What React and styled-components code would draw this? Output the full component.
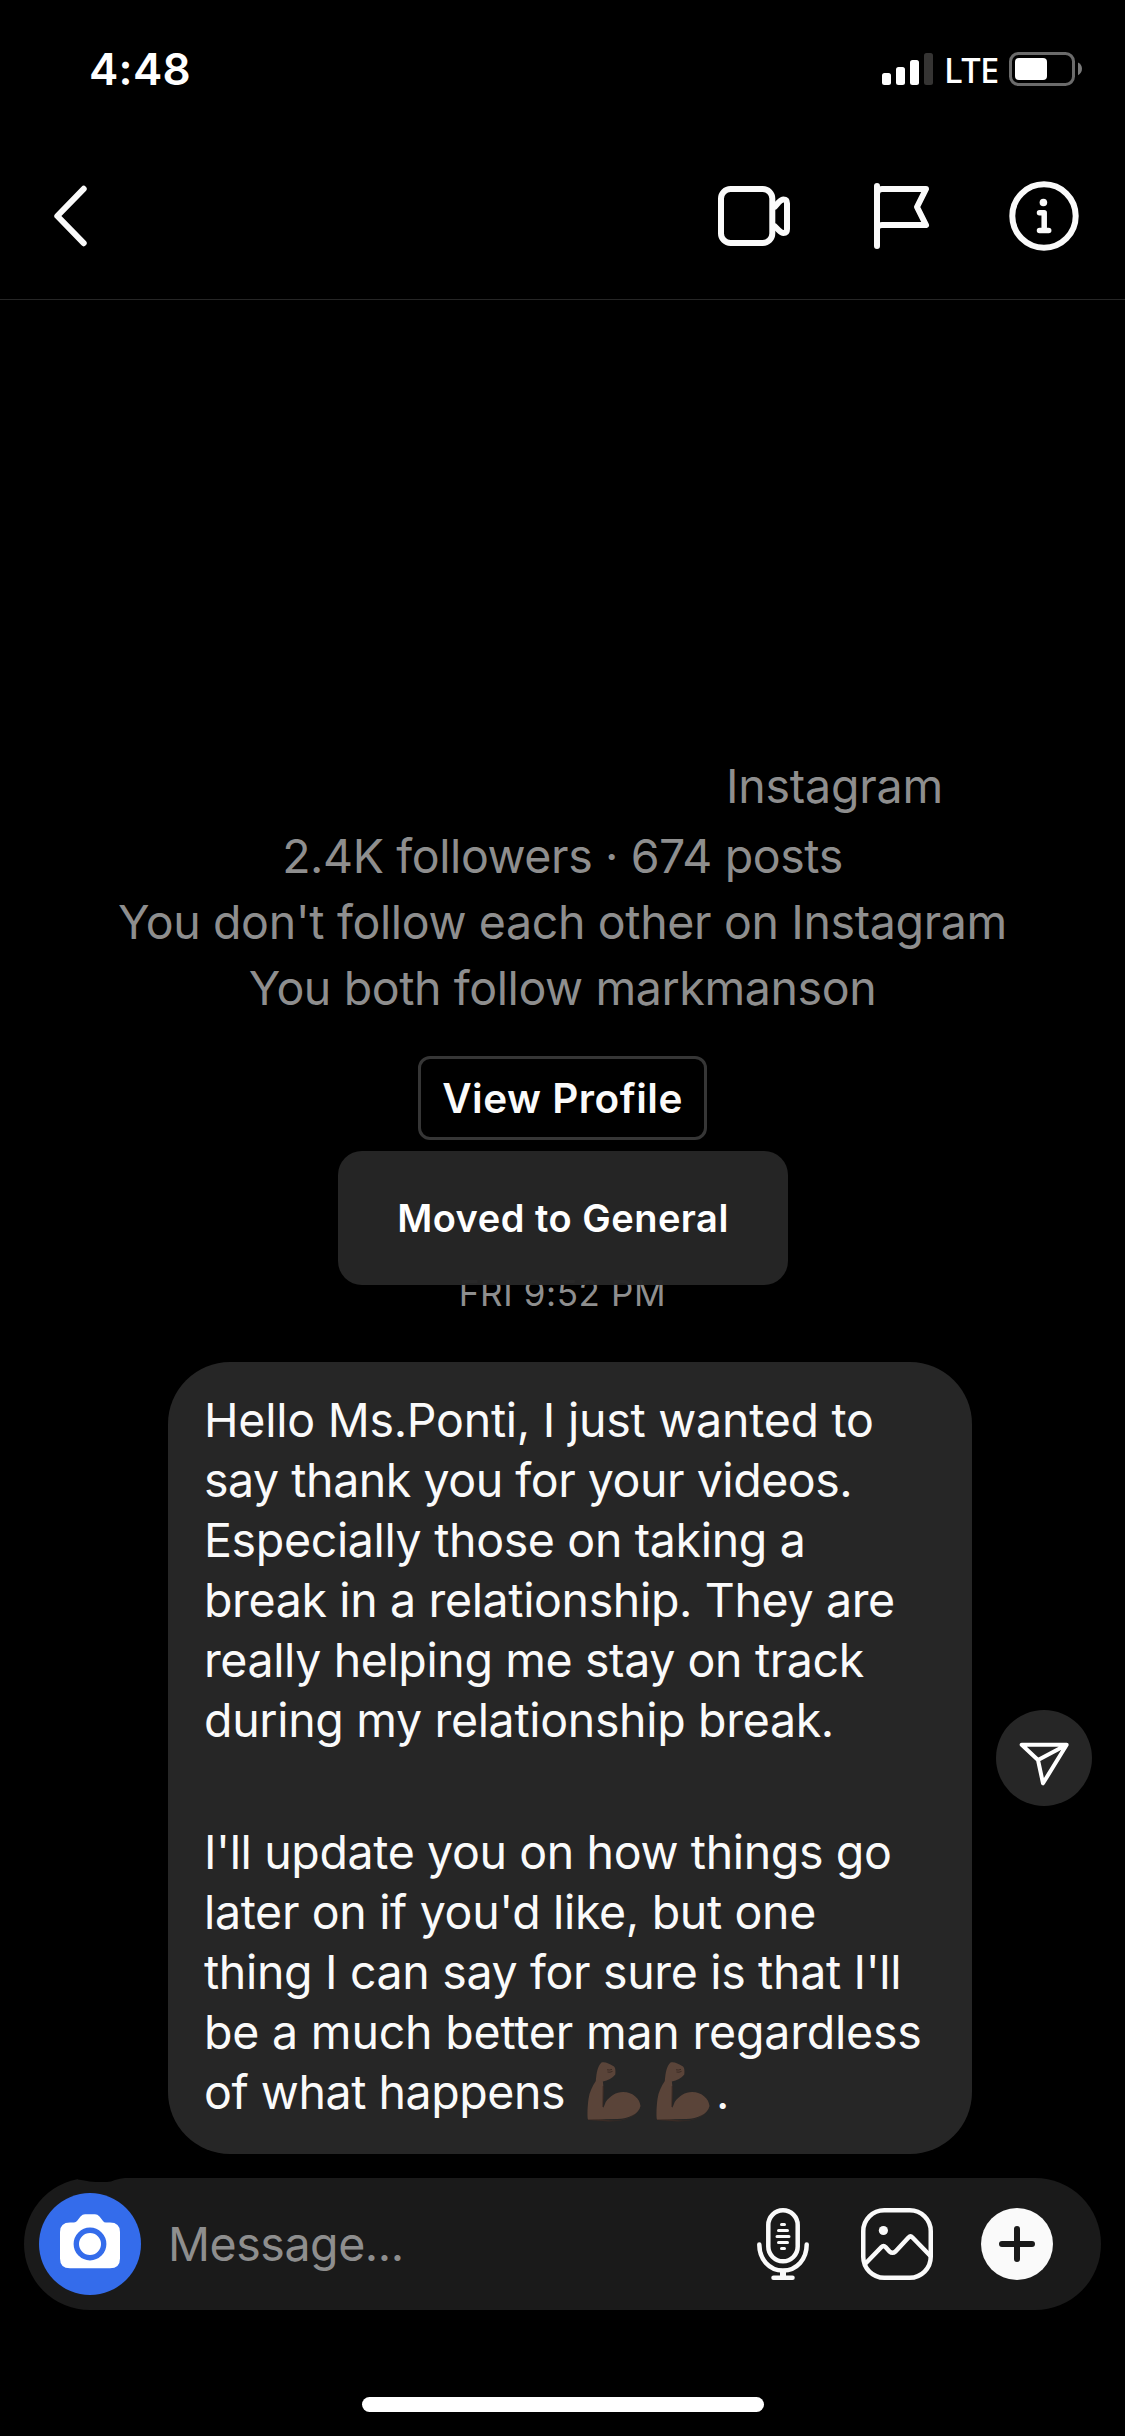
import React from 'react'
import styled, { createGlobalStyle } from 'styled-components'

const aboutLines = [
  { text: '2.4K followers · 674 posts', track: -0.4 },
  { text: "You don't follow each other on Instagram", track: -0.36 },
  { text: 'You both follow markmanson', track: -0.4 },
]

const paragraphs = [
  [
    { text: 'Hello Ms.Ponti, I just wanted to', track: -0.25 },
    { text: 'say thank you for your videos.', track: -0.46 },
    { text: 'Especially those on taking a', track: -0.35 },
    { text: 'break in a relationship. They are', track: -0.36 },
    { text: 'really helping me stay on track', track: -0.39 },
    { text: 'during my relationship break.', track: -0.33 },
  ],
  [
    { text: "I'll update you on how things go", track: -0.37 },
    { text: "later on if you'd like, but one", track: -0.34 },
    { text: "thing I can say for sure is that I'll", track: -0.34 },
    { text: 'be a much better man regardless', track: -0.2 },
    { text: 'of what happens', track: -0.45, flex: true },
  ],
]

function Biceps() {
  return (
    <BicepsIcon viewBox="0 0 54 60" role="img" aria-label="flexed biceps">
      <path fill="#3a2b25" d="M1 48C4 54 10 57 20 58C34 60 48 56 53 45L54 41C52 52 44 59 22 59.500L1 58Z" />
      <path
        fill="#5a4439"
        d="M14.500.5C18-.5 22 1.500 27 4.500C28.800 6.500 28.500 10 28.300 12.500C25.500 16 21 18.500 15.800 19.500C17 25 16 35 16 46C17 44.500 18 42 18.700 40C23 34 29 30 36 30C46 30 53 37 53.500 44C52 52 42 56.500 30 57L1 57.500C0 56 .5 44 1.500 37C2.500 30 5 25 8.800 19C9.500 12 10 5 14.500.5Z"
      />
      <path stroke="#33241f" strokeWidth=".8" fill="none" d="M20 7.800l2.500.2 2.500-.6M20.500 10l2.500.2 2.500-.8M16.200 24L15.900 45" />
    </BicepsIcon>
  )
}

function StatusBar() {
  return (
    <Status>
      <Clock>4:48</Clock>
      <svg width="51" height="32" viewBox="0 0 51 32" fill="#fff">
        <rect x="0" y="20" width="9" height="12" rx="2.500" />
        <rect x="14" y="14" width="9" height="18" rx="2.500" />
        <rect x="28" y="7" width="9" height="25" rx="2.500" />
        <rect x="42" y="0" width="9" height="32" rx="2.500" fill="#353433" />
      </svg>
      <Carrier>LTE</Carrier>
      <svg width="73" height="34" viewBox="0 0 73 34">
        <rect x="1.500" y="1.500" width="63" height="31" rx="8" fill="none" stroke="#6b6b6b" strokeWidth="3" />
        <rect x="6" y="6" width="32" height="22" rx="4" fill="#fff" />
        <path d="M69 10.500c2.500 1.200 4 3.500 4 6.300s-1.500 5.300-4 6.500z" fill="#7a7a7a" />
      </svg>
    </Status>
  )
}

function Header() {
  return (
    <TopBar>
      <BackButton>
        <svg width="40" height="72" viewBox="0 0 40 72">
          <path d="M35.700 8.800L9.300 36l26.400 27.200" />
        </svg>
      </BackButton>
      <Actions>
        <svg width="75" height="72" viewBox="0 0 75 72">
          <rect x="4" y="9" width="51.300" height="54" rx="9.500" />
          <path d="M58 26.500L61.500 22.500C63.500 20.500 65 19.500 66.500 19.500Q70 19.500 70 23.500V49Q70 53 66.500 53C65 53 63.500 52 61.500 50L58 46.500" />
        </svg>
        <svg width="60" height="72" viewBox="0 0 60 72">
          <path d="M4 6V66M4 14Q4 9 9 9H53L44 27L53 45H9Q4 45 4 49" />
        </svg>
        <svg width="72" height="72" viewBox="0 0 72 72">
          <circle cx="36" cy="36" r="31.700" />
          <circle cx="35.400" cy="22.500" r="3.800" fill="#fafafa" stroke="none" />
          <path d="M31.500 32.800H36.200V50.500M31.500 50.500H40.700" strokeWidth="5.500" />
        </svg>
      </Actions>
    </TopBar>
  )
}

function Composer() {
  return (
    <InputBar>
      <Notch viewBox="0 0 48 6">
        <path d="M0 0V1.500Q5 2 9 3Q13 4 22 4H29Q33 4 37 2Q42 .5 47 0Z" />
      </Notch>
      <CameraButton>
        <svg width="60" height="55" viewBox="0 0 60 55">
          <path
            fill="#fff"
            d="M10 8.500H14Q16 8.300 17 7L20.500 2.500Q22.500.3 25 .3H35Q37.500.3 39.500 2.500L43 7Q44 8.500 46 8.500H50Q60 8.500 60 18V44.500Q60 54.300 50 54.300H10Q0 54.300 0 44.500V18Q0 8.500 10 8.500Z"
          />
          <circle cx="30" cy="30" r="13.700" fill="none" stroke="#346ceb" strokeWidth="5.400" />
        </svg>
      </CameraButton>
      <Placeholder>Message...</Placeholder>
      <Tool>
        <rect x="21.300" y="2.300" width="29.400" height="51" rx="14.700" />
        <path d="M12.300 36.500C12.300 51 22 62.500 36 62.500S59.700 51 59.700 36.500" />
        <path d="M36 63V69" strokeWidth="6" strokeLinecap="butt" />
        <path d="M26.500 69.700H45.500" />
        <path d="M34.500 16.500h3M31.500 22.500h9M30 28.500h12M31.500 34.500h9M34.500 40.500h3" strokeWidth="3" />
      </Tool>
      <Tool $gap={42}>
        <rect x="2.250" y="2.250" width="67.500" height="67.500" rx="21" />
        <circle cx="22.400" cy="22.500" r="4.600" fill="#fafafa" stroke="none" />
        <path d="M4.500 55.500L20.500 39Q22.500 37 24.500 39L28.500 43.500Q31.500 46 34.500 43.500L47.500 29.500Q49.500 27.500 51.500 29.500L69 47.500" />
      </Tool>
      <Tool $gap={48}>
        <circle cx="36" cy="36" r="36" fill="#fafafa" stroke="none" />
        <path d="M36 21V51M21 36H51" stroke="#1a1a1a" strokeWidth="6" />
      </Tool>
    </InputBar>
  )
}

function App() {
  return (
    <Screen>
      <GlobalStyle />
      <StatusBar />
      <Header />
      <Thread>
        <AccountRow>
          <Line $track={-0.2}>Instagram</Line>
        </AccountRow>
        {aboutLines.map(line => <Line key={line.text} $track={line.track}>{line.text}</Line>)}
        <ProfileButton>View Profile</ProfileButton>
        <DateLabel>FRI 9:52 PM</DateLabel>
        <Toast>Moved to General</Toast>
      </Thread>
      <MessageRow>
        <Bubble>
          {paragraphs.map((lines, i) =>
            <Paragraph key={i}>
              {lines.map(line =>
                <BubbleLine key={line.text} $track={line.track}>
                  {line.text}
                  {line.flex && <Emojis><Biceps /><Biceps />.</Emojis>}
                </BubbleLine>)}
            </Paragraph>)}
        </Bubble>
        <ShareButton>
          <svg width="52" height="48" viewBox="0 0 52 48">
            <path d="M3.700 4.700H48.700L25 43.300L20 20ZM20 20L48.700 4.700" />
          </svg>
        </ShareButton>
      </MessageRow>
      <Composer />
      <HomeIndicator />
    </Screen>
  )
}

export default App

const GlobalStyle = createGlobalStyle`
  body {
    margin: 0;
    background: #000;
  }
`

const Screen = styled.div`
  width: 1125px;
  height: 2436px;
  overflow: hidden;
  display: flex;
  flex-direction: column;
  background: #000;
  color: #fafafa;
  font-family: Inter, "Liberation Sans", sans-serif;
  font-size: 46.5px;

  svg {
    display: block;
    flex: none;
  }
`

const Status = styled.div`
  height: 138px;
  display: flex;
  align-items: center;
  padding: 0 43px 0 89px;
  color: #fff;
`

const Clock = styled.div`
  flex: 1;
  font-size: 44px;
  font-weight: 600;
  letter-spacing: 0.3px;
`

const Carrier = styled.div`
  width: 76px;
  padding-left: 11px;
  box-sizing: border-box;
  font-family: "Noto Sans", sans-serif;
  font-size: 34.5px;
  font-weight: 500;
  letter-spacing: -0.6px;
`

const TopBar = styled.div`
  height: 162px;
  box-sizing: border-box;
  padding: 0 45px 5px 48px;
  display: flex;
  align-items: center;
  justify-content: space-between;
  border-bottom: 1px solid #262626;

  svg {
    fill: none;
    stroke: #fafafa;
    stroke-width: 6;
    stroke-linecap: round;
    stroke-linejoin: round;
  }
`

const BackButton = styled.div`
  display: flex;
`

const Actions = styled.div`
  display: flex;

  svg + svg {
    margin-left: 81px;
  }

  svg:last-child {
    margin-left: 75px;
  }
`

const Thread = styled.div`
  position: relative;
  padding-top: 453px;
  display: flex;
  flex-direction: column;
  align-items: center;
  color: #8e8e8e;
`

const Line = styled.div`
  line-height: 66px;
  white-space: nowrap;
  letter-spacing: ${({ $track }) => $track}px;
`

const AccountRow = styled.div`
  align-self: stretch;
  display: flex;
  justify-content: flex-end;
  padding: 0 182px 4px 0;
`

const ProfileButton = styled.div`
  width: 289px;
  height: 84px;
  margin-top: 35px;
  box-sizing: border-box;
  border: 3px solid #363636;
  border-radius: 12px;
  text-align: center;
  line-height: 80px;
  font-size: 40.5px;
  font-weight: 600;
  letter-spacing: 0.5px;
  color: #fafafa;
  white-space: nowrap;
`

const DateLabel = styled.div`
  margin-top: 131px;
  line-height: 44px;
  font-size: 35px;
  letter-spacing: 0.6px;
`

const Toast = styled.div`
  position: absolute;
  left: 338px;
  top: 851px;
  width: 450px;
  height: 134px;
  border-radius: 24px;
  background: rgba(38, 38, 38, 0.97);
  color: #fff;
  text-align: center;
  line-height: 135px;
  font-size: 38px;
  font-weight: 600;
  letter-spacing: 0.5px;
  white-space: nowrap;
`

const MessageRow = styled.div`
  display: flex;
  align-items: center;
  gap: 24px;
  margin-top: 47px;
  padding-left: 168px;
`

const Bubble = styled.div`
  width: 804px;
  height: 792px;
  box-sizing: border-box;
  padding: 28px 36px 0;
  border-radius: 62px;
  background: #262626;
`

const Paragraph = styled.div`
  & + & {
    margin-top: 72px;
  }
`

const BubbleLine = styled.div`
  display: flex;
  height: 60px;
  line-height: 60px;
  white-space: nowrap;
  letter-spacing: ${({ $track }) => $track}px;
`

const Emojis = styled.span`
  display: flex;
  padding-left: 7px;
`

const BicepsIcon = styled.svg`
  width: 54px;
  height: 60px;
  margin: 0 0 0 15px;

  &:last-child {
    margin-right: 6px;
  }
`

const ShareButton = styled.div`
  width: 96px;
  height: 96px;
  border-radius: 50%;
  background: #262626;
  display: flex;
  justify-content: center;
  padding-top: 30px;
  box-sizing: border-box;

  svg {
    fill: none;
    stroke: #fff;
    stroke-width: 4;
    stroke-linejoin: round;
  }
`

const InputBar = styled.div`
  position: relative;
  height: 132px;
  margin: 24px 24px 0;
  padding: 0 48px 0 15px;
  box-sizing: border-box;
  border-radius: 66px;
  background: #1a1a1a;
  display: flex;
  align-items: center;
`

const Notch = styled.svg`
  position: absolute;
  left: 54px;
  top: 0;
  width: 48px;
  height: 6px;
`

const CameraButton = styled.div`
  width: 102px;
  height: 102px;
  border-radius: 50%;
  background: #346ceb;
  display: flex;
  align-items: center;
  justify-content: center;
  padding-bottom: 6px;
  box-sizing: border-box;
`

const Placeholder = styled.div`
  flex: 1;
  padding-left: 27px;
  color: #8e8e8e;
  letter-spacing: -0.45px;
`

const Tool = styled.svg.attrs({ viewBox: '0 0 72 72' })`
  width: 72px;
  height: 72px;
  margin-left: ${({ $gap }) => $gap || 0}px;
  fill: none;
  stroke: #fafafa;
  stroke-width: 4.5;
  stroke-linecap: round;
  stroke-linejoin: round;
`

const HomeIndicator = styled.div`
  align-self: center;
  width: 402px;
  height: 15px;
  margin-top: 87px;
  border-radius: 8px;
  background: #fff;
`
